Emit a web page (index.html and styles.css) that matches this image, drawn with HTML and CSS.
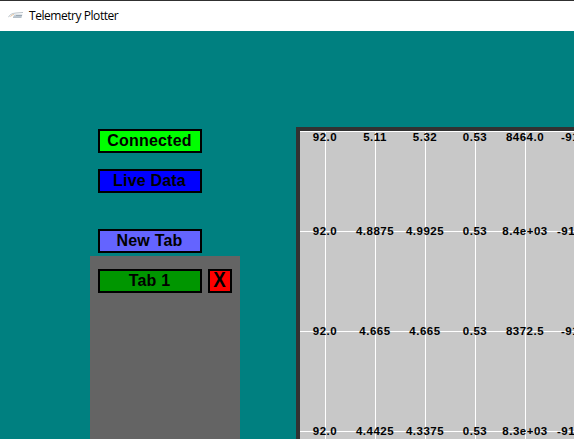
FILE: index.html
```
<!DOCTYPE html>
<html lang="en">
<head>
<meta charset="utf-8">
<title>Telemetry Plotter</title>
<link rel="stylesheet" href="styles.css">
</head>
<body>
<header class="titlebar">
  <svg class="logo" width="16" height="16" viewBox="0 0 16 16" fill="none">
    <path d="M.5 9.2Q2 5.5 8 5L15 4.5" stroke="#a9b4bb" stroke-width=".8"/>
    <path d="M2.5 8.8Q4 6.2 6 6.5" stroke="#e5c7a5"/>
    <path d="M5 9.2L6.5 6.5H14.5L13.5 9.2Z" fill="#c3cfd8"/>
    <path d="M5 9.3H13.5M8 7.5H14" stroke="#8997a4" stroke-width=".7"/>
  </svg>
  <span>Telemetry Plotter</span>
</header>
<main class="workspace">
  <aside class="sidebar">
    <button class="btn connected">Connected</button>
    <button class="btn live">Live Data</button>
    <button class="btn new-tab">New Tab</button>
    <div class="tabs">
      <button class="btn tab">Tab 1</button>
      <button class="btn close"><span>X</span></button>
    </div>
  </aside>
  <section class="plot">
    <div class="row first"><span>92.0</span><span>5.11</span><span>5.32</span><span>0.53</span><span>8464.0</span><span class="edge">-91</span></div>
    <div class="row"><span>92.0</span><span>4.8875</span><span>4.9925</span><span>0.53</span><span>8.4e+03</span><span class="edge">-91</span></div>
    <div class="row"><span>92.0</span><span>4.665</span><span>4.665</span><span>0.53</span><span>8372.5</span><span class="edge short">-91</span></div>
    <div class="row"><span>92.0</span><span>4.4425</span><span>4.3375</span><span>0.53</span><span>8.3e+03</span><span class="edge">-91</span></div>
  </section>
</main>
</body>
</html>
```
FILE: styles.css
```
* { box-sizing: border-box; }
body {
  margin: 0;
  width: 574px;
  height: 439px;
  overflow: hidden;
  display: flex;
  flex-direction: column;
  background: #008080;
  font-family: "Liberation Sans", Arial, sans-serif;
  color: #000;
}
.titlebar {
  flex: none;
  height: 31px;
  display: flex;
  align-items: center;
  gap: 5px;
  padding: 0 0 1px 8px;
  background: #fff;
  border-top: 1px solid #303030;
  font: 12px "Open Sans", "Noto Sans", sans-serif;
  letter-spacing: -0.45px;
}
.workspace {
  flex: 1;
  min-height: 0;
  display: flex;
}
.sidebar {
  flex: none;
  width: 150px;
  margin-left: 90px;
  padding-top: 98px;
  display: flex;
  flex-direction: column;
}
.btn {
  flex: none;
  width: 104px;
  height: 24px;
  margin: 0 0 0 8px;
  padding: 0 1px 0 0;
  border: 2px solid #000;
  font: bold 16px/20px "Liberation Sans", Arial, sans-serif;
  letter-spacing: 0.2px;
  color: #000;
  text-align: center;
}
.connected { background: #00ff00; }
.live { margin-top: 16px; background: #0000ff; }
.new-tab { margin-top: 36px; background: #6464ff; }
.tabs {
  flex: 1;
  margin-top: 3px;
  padding-top: 13px;
  display: flex;
  align-items: flex-start;
  background: #646464;
}
.tab { background: #009600; }
.close {
  width: 24px;
  margin-left: 6px;
  background: #ff0000;
  font-size: 22px;
  line-height: 18px;
}
.close span {
  display: block;
  height: 20px;
  transform: scaleX(0.85);
}
.plot {
  flex: none;
  width: 304px;
  margin: 96px 0 0 56px;
  border-top: 4px solid #323232;
  border-left: 4px solid #323232;
  background:
    linear-gradient(90deg, transparent 25px, #fff 25px, #fff 26px, transparent 26px) 0 0 / 50px 100px,
    linear-gradient(#fff 1px, transparent 1px) 0 0 / 50px 100px,
    #c8c8c8;
}
.row {
  display: grid;
  grid-template-columns: repeat(6, 50px);
  height: 20px;
  margin-bottom: 80px;
  font-weight: bold;
  font-size: 11.5px;
  line-height: 20px;
  letter-spacing: 0.5px;
}
.row span {
  display: flex;
  justify-content: center;
  white-space: nowrap;
}
.row .edge {
  justify-content: flex-start;
  padding-left: 7px;
}
.row.first {
  height: 12px;
  line-height: 12px;
  margin-bottom: 78px;
}
.row.first .edge, .row .short { padding-left: 11px; }
```
